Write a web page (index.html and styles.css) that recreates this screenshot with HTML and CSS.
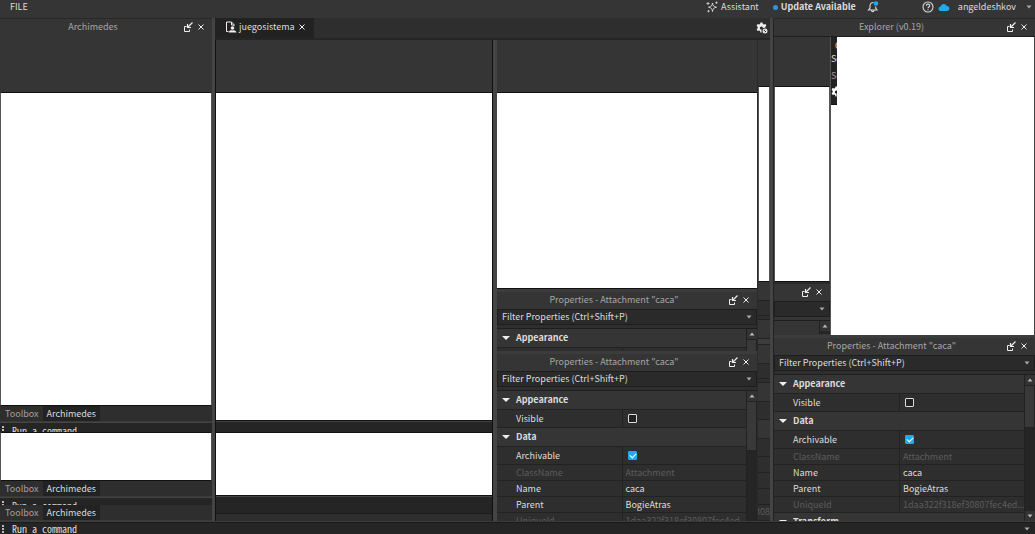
FILE: index.html
```html
<!DOCTYPE html>
<html lang="en">
<head>
    <meta charset="UTF-8">
    <meta name="viewport" content="width=device-width, initial-scale=1.0">
    <title>juegosistema</title>
    <link rel="stylesheet" href="styles.css">
</head>
<body>
    <!-- Shared icons -->
    <svg class="symbols" aria-hidden="true">
        <symbol id="popout" viewBox="0 0 10 10">
            <path d="M3.500 4.500H1.500V9.500H6.500V7.500" fill="none" stroke="currentColor"/>
            <path d="M9.500 0.500L5 5M4.500 2V5.500H8" fill="none" stroke="currentColor" stroke-width="1.200"/>
        </symbol>
        <symbol id="close" viewBox="0 0 10 10">
            <path d="M2.500 2.500L7.500 7.500M7.500 2.500L2.500 7.500" fill="none" stroke="currentColor"/>
        </symbol>
        <symbol id="gear" viewBox="0 0 12 12">
            <path d="M4.500 0.500h2l.4 1.500 1 .5 1.500-.5 1 1.700-1.100 1.100v1l-2.300.2a1.600 1.600 0 1 0-1.600 1.600l.3 2.900h-1.200l-.4-1.500-1-.5-1.500.5-1-1.700 1.100-1.100v-1.200L.6 3.700l1-1.700 1.500.5 1-.5z" fill="currentColor"/>
            <circle cx="9" cy="9" r="1.900" fill="none" stroke="currentColor" stroke-width="1.200"/>
            <path d="M7.500 10.500L10.500 7.500" stroke="currentColor"/>
        </symbol>
        <symbol id="down" viewBox="0 0 6 4"><path d="M0.500 0.500h5L3 3.500z" fill="currentColor"/></symbol>
        <symbol id="up" viewBox="0 0 6 4"><path d="M0.500 3.500h5L3 0.500z" fill="currentColor"/></symbol>
    </svg>

    <header class="menubar">
        <button class="menu-item">FILE</button>
        <div class="menu-right">
            <button class="assistant">
                <svg width="12" height="12" viewBox="0 0 12 12"><path d="M6.500 2C7 5 7.500 5.500 10.500 6.200 7.500 7 7 7.500 6.500 10.500 6 7.500 5.500 7 2.500 6.200 5.500 5.500 6 5 6.500 2z" fill="none" stroke="currentColor" stroke-width=".9"/><path d="M2 1v3M.5 2.500h3M10.500 .5v2.400M9.300 1.700h2.400M2.500 9v2.400M1.300 10.200h2.400" stroke="currentColor" stroke-width=".8"/></svg>
                Assistant
            </button>
            <button class="update"><span class="dot"></span>Update Available</button>
            <button class="bell" aria-label="Notifications">
                <svg width="12" height="12" viewBox="0 0 12 12"><path d="M6.500 1.500C4 1.500 3 3 3 5v2L1.500 9h8.500L8.700 7V5.500M4.500 9.500c.3 1.500 2.300 1.500 2.600 0" fill="none" stroke="currentColor" stroke-width="1.100"/><circle cx="9" cy="2.500" r="2.300" fill="#1eaaf1"/></svg>
            </button>
            <button class="help" aria-label="Help">
                <svg width="12" height="12" viewBox="0 0 12 12"><circle cx="6" cy="6" r="5" fill="none" stroke="currentColor" stroke-width="1.100"/><path d="M4.300 4.800C4.300 2.600 7.700 2.600 7.700 4.700 7.700 6 6 5.900 6 7.200M6 8.200v1" fill="none" stroke="currentColor" stroke-width="1.100"/></svg>
            </button>
            <svg class="cloud" width="12" height="8" viewBox="0 0 12 8"><path d="M3 8a2.300 2.300 0 0 1-.4-4.600A3.200 3.200 0 0 1 8.700 3 2.500 2.500 0 0 1 9 8z" fill="#1eaaf1"/></svg>
            <button class="user">angeldeshkov <svg width="6" height="4"><use href="#down"/></svg></button>
        </div>
    </header>

    <main class="workspace">
        <section class="left-dock">
            <div class="titlebar">
                <h2>Archimedes</h2>
                <button aria-label="Float"><svg><use href="#popout"/></svg></button>
                <button aria-label="Close"><svg><use href="#close"/></svg></button>
            </div>
            <div class="blank dock-blank"></div>
            <div class="canvas grow"></div>
            <nav class="tabs"><button>Toolbox</button><button class="active">Archimedes</button></nav>
            <div class="strip command-strip"><i class="grip"></i><span>Run a command</span></div>
            <div class="canvas lower-left"></div>
            <nav class="tabs"><button>Toolbox</button><button class="active">Archimedes</button></nav>
            <div class="strip command-strip short"><i class="grip"></i><span>Run a command</span></div>
            <nav class="tabs"><button>Toolbox</button><button class="active">Archimedes</button></nav>
        </section>

        <section class="center">
            <div class="doc-tabs">
                <div class="doc-tab">
                    <svg width="12" height="12" viewBox="0 0 12 12"><path d="M3.500 10.500H1.500V1H6.500L9 3.500V5M6.500 1v3H9" fill="none" stroke="currentColor"/><circle cx="7.500" cy="7" r="1.800" fill="currentColor"/><path d="M3.500 11.500c1-2.500 2.500-2.500 4-2 1.500-.5 3.500 0 4 2z" fill="currentColor"/></svg>
                    <span>juegosistema</span>
                    <button aria-label="Close tab"><svg width="10" height="10"><use href="#close"/></svg></button>
                </div>
                <button class="settings" aria-label="Settings"><svg width="12" height="12"><use href="#gear"/></svg></button>
            </div>
            <div class="panes">
                <div class="viewport">
                    <div class="blank"></div>
                    <div class="canvas grow"></div>
                    <div class="strip"></div>
                    <div class="canvas lower-view"></div>
                    <div class="strip tall"></div>
                    <div class="status"></div>
                </div>
                <div class="middle">
                    <div class="blank"></div>
                    <div class="canvas grow"></div>
                    <div class="properties peek">
                        <div class="titlebar">
                            <h2>Properties - Attachment "caca"</h2>
                            <button aria-label="Float"><svg><use href="#popout"/></svg></button>
                            <button aria-label="Close"><svg><use href="#close"/></svg></button>
                        </div>
                        <div class="filter">
                            <input type="text" aria-label="Filter Properties" placeholder="Filter Properties (Ctrl+Shift+P)">
                            <button aria-label="Filter options"><svg width="6" height="4"><use href="#down"/></svg></button>
                        </div>
                        <div class="list">
                            <table>
                                <tr class="group"><th colspan="2">Appearance</th></tr>
                                <tr class="tall-row"><td></td><td></td></tr>
                            </table>
                            <div class="scrollbar"><button aria-label="Scroll up"><svg width="6" height="4"><use href="#up"/></svg></button><div class="thumb"></div></div>
                        </div>
                    </div>
                    <div class="properties front">
                        <div class="titlebar">
                            <h2>Properties - Attachment "caca"</h2>
                            <button aria-label="Float"><svg><use href="#popout"/></svg></button>
                            <button aria-label="Close"><svg><use href="#close"/></svg></button>
                        </div>
                        <div class="filter">
                            <input type="text" aria-label="Filter Properties" placeholder="Filter Properties (Ctrl+Shift+P)">
                            <button aria-label="Filter options"><svg width="6" height="4"><use href="#down"/></svg></button>
                        </div>
                        <div class="list">
                            <table>
                                <tr class="group"><th colspan="2">Appearance</th></tr>
                                <tr class="tall-row"><td><label for="visible1">Visible</label></td><td><input type="checkbox" id="visible1"></td></tr>
                                <tr class="group"><th colspan="2">Data</th></tr>
                                <tr class="tall-row"><td><label for="archivable1">Archivable</label></td><td><input type="checkbox" id="archivable1" checked></td></tr>
                                <tr class="readonly"><td>ClassName</td><td>Attachment</td></tr>
                                <tr><td>Name</td><td>caca</td></tr>
                                <tr><td>Parent</td><td>BogieAtras</td></tr>
                                <tr class="readonly"><td>UniqueId</td><td>1daa322f318ef30807fec4ed...</td></tr>
                            </table>
                            <div class="scrollbar"><button aria-label="Scroll up"><svg width="6" height="4"><use href="#up"/></svg></button><div class="thumb"></div></div>
                        </div>
                    </div>
                </div>
                <!-- Edge of the panel behind -->
                <div class="sliver">
                    <div class="blank"></div>
                    <div class="canvas grow"></div>
                    <div class="cell head"></div>
                    <div class="cell field"></div>
                    <div class="cell gap"></div>
                    <div class="cell group-cell"></div>
                    <div class="cell bar"></div>
                    <div class="cell head"></div>
                    <div class="cell field"></div>
                    <div class="cell gap"></div>
                    <div class="cell group-cell"></div>
                    <div class="cell tall-cell"></div>
                    <div class="cell group-cell"></div>
                    <div class="cell tall-cell"></div>
                    <div class="cell"></div>
                    <div class="cell"></div>
                    <div class="cell"></div>
                    <div class="cell id-cell">308</div>
                </div>
            </div>
        </section>

        <section class="right-dock">
            <div class="titlebar">
                <h2>Explorer (v0.19)</h2>
                <button aria-label="Float"><svg><use href="#popout"/></svg></button>
                <button aria-label="Close"><svg><use href="#close"/></svg></button>
            </div>
            <div class="explorer">
                <div class="behind">
                    <div class="blank"></div>
                    <div class="canvas grow"></div>
                    <div class="titlebar">
                        <button aria-label="Float"><svg><use href="#popout"/></svg></button>
                        <button aria-label="Close"><svg><use href="#close"/></svg></button>
                    </div>
                    <div class="filter"><button aria-label="Filter options"><svg width="6" height="4"><use href="#down"/></svg></button></div>
                    <div class="list">
                        <div class="list-head"></div>
                        <div class="scrollbar"><button aria-label="Scroll up"><svg width="6" height="4"><use href="#up"/></svg></button></div>
                    </div>
                </div>
                <div class="tree">
                    <div class="toolbar-edge">
                        <span class="search-mark">C</span>
                        <span>Se</span>
                        <span class="second">Se</span>
                        <svg width="12" height="12"><use href="#gear"/></svg>
                    </div>
                </div>
            </div>
            <div class="properties">
                <div class="titlebar">
                    <h2>Properties - Attachment "caca"</h2>
                    <button aria-label="Float"><svg><use href="#popout"/></svg></button>
                    <button aria-label="Close"><svg><use href="#close"/></svg></button>
                </div>
                <div class="filter">
                    <input type="text" aria-label="Filter Properties" placeholder="Filter Properties (Ctrl+Shift+P)">
                    <button aria-label="Filter options"><svg width="6" height="4"><use href="#down"/></svg></button>
                </div>
                <div class="list">
                    <table>
                        <tr class="group"><th colspan="2">Appearance</th></tr>
                        <tr class="tall-row"><td><label for="visible2">Visible</label></td><td><input type="checkbox" id="visible2"></td></tr>
                        <tr class="group"><th colspan="2">Data</th></tr>
                        <tr class="tall-row"><td><label for="archivable2">Archivable</label></td><td><input type="checkbox" id="archivable2" checked></td></tr>
                        <tr class="readonly"><td>ClassName</td><td>Attachment</td></tr>
                        <tr><td>Name</td><td>caca</td></tr>
                        <tr><td>Parent</td><td>BogieAtras</td></tr>
                        <tr class="readonly"><td>UniqueId</td><td>1daa322f318ef30807fec4ed...</td></tr>
                        <tr class="group"><th colspan="2">Transform</th></tr>
                    </table>
                    <div class="scrollbar">
                        <button aria-label="Scroll up"><svg width="6" height="4"><use href="#up"/></svg></button>
                        <div class="thumb short-thumb"></div>
                        <button class="last" aria-label="Scroll down"><svg width="6" height="4"><use href="#down"/></svg></button>
                    </div>
                </div>
            </div>
        </section>
    </main>

    <footer class="command-bar">
        <i class="grip"></i>
        <input type="text" aria-label="Command" placeholder="Run a command">
        <button aria-label="Command history"><svg width="6" height="4"><use href="#down"/></svg></button>
    </footer>
</body>
</html>
```
FILE: styles.css
```css
* {
    box-sizing: border-box;
}
body {
    margin: 0;
    height: 100vh;
    display: flex;
    flex-direction: column;
    overflow: hidden;
    background: #353535;
    color: #dcdcdc;
    font-family: "Noto Sans CJK JP", "Noto Sans", sans-serif;
    font-size: 9px;
    line-height: 14px;
}
button, input {
    font: inherit;
    color: inherit;
    background: none;
    border: none;
    padding: 0;
    margin: 0;
    outline: none;
}
button {
    display: flex;
    align-items: center;
    white-space: nowrap;
}
svg {
    display: block;
    flex: none;
}
.symbols {
    position: absolute;
    width: 0;
    height: 0;
}

/* Menu bar */
.menubar {
    height: 18px;
    flex: none;
    display: flex;
    align-items: center;
    justify-content: space-between;
    padding: 0 3px 4px 10px;
}
.menu-right {
    display: flex;
    align-items: center;
}
.assistant {
    gap: 3px;
    margin-right: 14px;
}
.update {
    gap: 3px;
    font-weight: bold;
    margin-right: 11px;
}
.dot {
    width: 5px;
    height: 5px;
    border-radius: 50%;
    background: #2f95dc;
}
.bell {
    margin-right: 43px;
}
.cloud {
    margin: 0 8px 0 4px;
}
.user {
    gap: 10px;
}

/* Layout */
.workspace {
    flex: 1;
    min-height: 0;
    display: flex;
    border-bottom: 1px solid #3c3c3c;
}
.left-dock {
    width: 212px;
    flex: none;
    display: flex;
    flex-direction: column;
    border-top: 1px solid #282828;
}
.center {
    flex: 1;
    min-width: 0;
    display: flex;
    flex-direction: column;
    border-left: 3px solid #444;
    border-right: 3px solid #444;
}
.right-dock {
    width: 262px;
    flex: none;
    display: flex;
    flex-direction: column;
    border-top: 1px solid #282828;
    border-left: 1px solid #222;
}
.panes {
    flex: 1;
    min-height: 0;
    display: flex;
}
.viewport, .middle, .sliver, .behind {
    display: flex;
    flex-direction: column;
}
.viewport {
    flex: 1;
    border-left: 1px solid #111;
    border-right: 1px solid #111;
}
.middle {
    width: 265px;
    flex: none;
    border-left: 4px solid #444;
    border-right: 1px solid #2a2a2a;
}
.sliver {
    width: 12px;
    flex: none;
    overflow: hidden;
}
.blank {
    flex: none;
    height: 52px;
    background: #353535;
}
.dock-blank {
    height: 56px;
}
.sliver .blank {
    height: 46px;
}
.canvas {
    flex: none;
    background: white;
    border: 1px solid #111;
    border-left-color: #555;
    border-right-color: #555;
}
.viewport .canvas, .middle .canvas {
    border-left: none;
    border-right: none;
}
.grow {
    flex: 1;
    min-height: 0;
}
.lower-left {
    height: 49px;
}
.lower-view {
    height: 64px;
}
.strip {
    flex: none;
    height: 11px;
    background: #252525;
    border-top: 1px solid #444;
}
.strip.tall {
    height: 17px;
}
.status {
    flex: none;
    height: 8px;
    background: #2e2e2e;
    border-top: 1px solid #1c1c1c;
}

/* Title bars */
.titlebar {
    flex: none;
    height: 17px;
    display: flex;
    align-items: center;
    justify-content: flex-end;
    background: #353535;
    padding: 0 6px 1px;
}
.titlebar h2 {
    flex: 1;
    margin: 0;
    font-size: 9px;
    font-weight: normal;
    text-align: center;
    color: #a6a6a6;
    white-space: nowrap;
}
.titlebar button {
    width: 10px;
    margin-left: 3px;
    color: #eee;
}
.titlebar svg {
    width: 10px;
    height: 10px;
}

/* Tabs */
.tabs {
    flex: none;
    height: 16px;
    display: flex;
    background: #2e2e2e;
    border-bottom: 1px solid #3a3a3a;
    padding-left: 1px;
}
.tabs button {
    padding: 0 4px;
    color: #a0a0a0;
}
.tabs .active {
    background: #222;
    color: #dcdcdc;
}
.doc-tabs {
    flex: none;
    height: 22px;
    display: flex;
    justify-content: space-between;
    background: #2e2e2e;
    border-bottom: 2px solid #252525;
}
.doc-tab {
    display: flex;
    align-items: center;
    gap: 2px;
    width: 99px;
    padding: 0 0 2px 10px;
    background: #222;
}
.doc-tab svg, .settings {
    color: #eee;
}
.settings {
    margin-right: 2px;
}

/* Properties */
.properties {
    flex: none;
    display: flex;
    flex-direction: column;
    border-top: 3px solid #3c3c3c;
    background: #2e2e2e;
    overflow: hidden;
}
.peek {
    height: 62px;
}
.front {
    height: 170px;
}
.right-dock > .properties {
    height: 186px;
}
.filter {
    flex: none;
    height: 16px;
    display: flex;
    align-items: center;
    justify-content: flex-end;
    background: #2a2a2a;
    border: 1px solid #1e1e1e;
    padding: 0 4px;
}
.filter input {
    flex: 1;
    min-width: 0;
    height: 14px;
}
.filter button, .user svg, .command-bar button {
    color: #aaa;
}
input::placeholder {
    color: #dcdcdc;
    opacity: 1;
}
.list {
    flex: 1;
    min-height: 0;
    display: flex;
    align-items: flex-start;
    margin-top: 3px;
    border-top: 1px solid #1e1e1e;
    overflow: hidden;
}
table {
    flex: 1;
    width: 100%;
    min-width: 0;
    border-spacing: 0;
    table-layout: fixed;
}
td, th {
    height: 16px;
    padding: 0 0 0 19px;
    border-bottom: 1px solid #222;
    line-height: 14px;
    text-align: left;
    white-space: nowrap;
    overflow: hidden;
}
td + td {
    padding-left: 3px;
    border-left: 1px solid #222;
}
.group th {
    height: 19px;
    padding-left: 5px;
    background: #353535;
}
.group th::before {
    content: "";
    display: inline-block;
    margin-right: 6px;
    border: 4px solid transparent;
    border-top-color: #eee;
    border-bottom: none;
    vertical-align: 1px;
}
.tall-row td {
    height: 18px;
}
.readonly {
    color: #5c5c5c;
}
input[type="checkbox"] {
    appearance: none;
    display: block;
    width: 9px;
    height: 9px;
    margin-left: 2px;
    border: 1px solid #ddd;
    border-radius: 1px;
    background: #222;
}
input[type="checkbox"]:checked {
    background: #1eaaf1;
    border-color: #1eaaf1;
}
input[type="checkbox"]:checked::after {
    content: "";
    display: block;
    width: 5px;
    height: 3px;
    margin: 1px;
    border-left: 1px solid white;
    border-bottom: 1px solid white;
    transform: rotate(-45deg);
}
.scrollbar {
    align-self: stretch;
    width: 11px;
    flex: none;
    display: flex;
    flex-direction: column;
    background: #252525;
    border-left: 1px solid #222;
}
.scrollbar button {
    height: 10px;
    flex: none;
    justify-content: center;
    background: #333;
    color: #bbb;
}
.thumb {
    height: 50px;
    flex: none;
    background: #393939;
    border: 1px solid #222;
    border-left: none;
}
.short-thumb {
    height: 43px;
}
.scrollbar .last {
    margin-top: auto;
}

/* Sliver cells */
.cell {
    flex: none;
    height: 16px;
    background: #2e2e2e;
    border-bottom: 1px solid #222;
}
.cell.head {
    height: 19px;
    background: #353535;
}
.cell.field {
    height: 15px;
}
.cell.gap {
    height: 4px;
}
.cell.group-cell {
    height: 19px;
    background: #353535;
}
.cell.tall-cell {
    height: 18px;
}
.cell.bar {
    height: 6px;
    background: #3c3c3c;
}
.id-cell {
    display: flex;
    justify-content: flex-end;
    color: #5c5c5c;
}

/* Explorer */
.explorer {
    flex: 1;
    min-height: 0;
    display: flex;
    border-top: 1px solid #1e1e1e;
}
.behind {
    width: 56px;
    flex: none;
}
.behind .blank {
    height: 49px;
}
.behind .titlebar {
    height: 19px;
    border-top: 2px solid #2a2a2a;
}
.behind .list {
    flex: none;
    height: 14px;
    margin-bottom: 1px;
}
.list-head {
    flex: 1;
    align-self: stretch;
    background: #353535;
}
.tree {
    flex: 1;
    min-width: 0;
    background: white;
    border-left: 1px solid #555;
    border-right: 1px solid #444;
}
.toolbar-edge {
    width: 6px;
    height: 68px;
    padding-top: 2px;
    overflow: hidden;
    background: #222;
    border-bottom: 1px solid #111;
}
.toolbar-edge span {
    display: block;
    line-height: 13px;
}
.toolbar-edge .search-mark {
    padding-left: 4px;
}
.toolbar-edge .second {
    margin: 4px 0;
    color: #b09a88;
}
.toolbar-edge svg {
    color: white;
}

/* Command bar */
.grip {
    width: 3px;
    height: 8px;
    flex: none;
    border-left: 2px dotted #bbb;
}
.command-bar {
    flex: none;
    height: 12px;
    display: flex;
    align-items: center;
    gap: 7px;
    padding: 1px 5px 0 2px;
    background: #252525;
    border-top: 1px solid #1a1a1a;
    overflow: hidden;
}
.command-bar input {
    flex: 1;
    height: 10px;
}
.command-bar input, .command-strip {
    font-family: "Noto Sans Mono CJK JP", "DejaVu Sans Mono", monospace;
    font-size: 10px;
}
.command-strip {
    height: 10px;
    display: flex;
    gap: 7px;
    padding-left: 2px;
    line-height: 16px;
    overflow: hidden;
}
.command-strip .grip {
    margin-top: 3px;
}
.command-strip.short {
    height: 8px;
}
```
